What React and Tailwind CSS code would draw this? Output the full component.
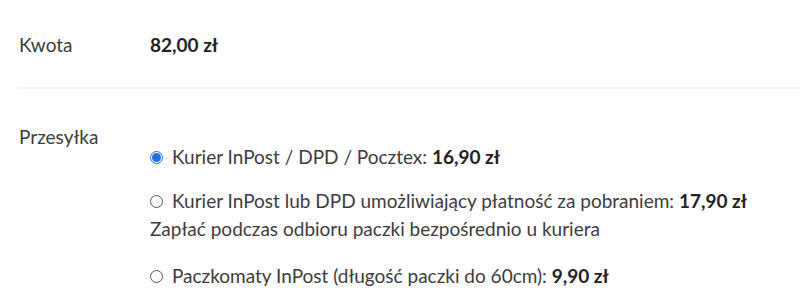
export default function App() {
  const Radio = ({ checked }) =>
    checked ? (
      <span className="inline-flex items-center justify-center w-[13px] h-[13px] rounded-full border border-[#1a73e8] mr-[9px] shrink-0">
        <span className="w-[9px] h-[9px] rounded-full bg-[#1a73e8]" />
      </span>
    ) : (
      <span className="inline-block w-[13px] h-[13px] rounded-full border border-[#555] mr-[9px] shrink-0" />
    );
  return (
    <div className="w-[800px] h-[304px] bg-white text-[#3c3c3c] text-[19px] overflow-hidden" style={{ fontFamily: "Lato, 'Open Sans', sans-serif" }}>
      <div className="flex pl-[19px] pt-[31px] pb-[28px] leading-[28px]">
        <div className="w-[131px]">Kwota</div>
        <div className="font-bold text-[#222]">82,00 zł</div>
      </div>
      <div className="ml-[18px] h-[2px] bg-[#f2f2f2]" />
      <div className="flex pl-[19px] pt-[34px] leading-[28px]">
        <div className="w-[131px]">Przesyłka</div>
        <div className="pt-[20px] flex flex-col gap-[16px]">
          <div className="flex items-center">
            <Radio checked />
            <span>Kurier InPost / DPD / Pocztex: <b className="text-[#222]">16,90 zł</b></span>
          </div>
          <div>
            <div className="flex items-center">
              <Radio />
              <span>Kurier InPost lub DPD umożliwiający płatność za pobraniem: <b className="text-[#222]">17,90 zł</b></span>
            </div>
            <div>Zapłać podczas odbioru paczki bezpośrednio u kuriera</div>
          </div>
          <div className="flex items-center pt-[3px]">
            <Radio />
            <span>Paczkomaty InPost (długość paczki do 60cm): <b className="text-[#222]">9,90 zł</b></span>
          </div>
        </div>
      </div>
    </div>
  );
}
